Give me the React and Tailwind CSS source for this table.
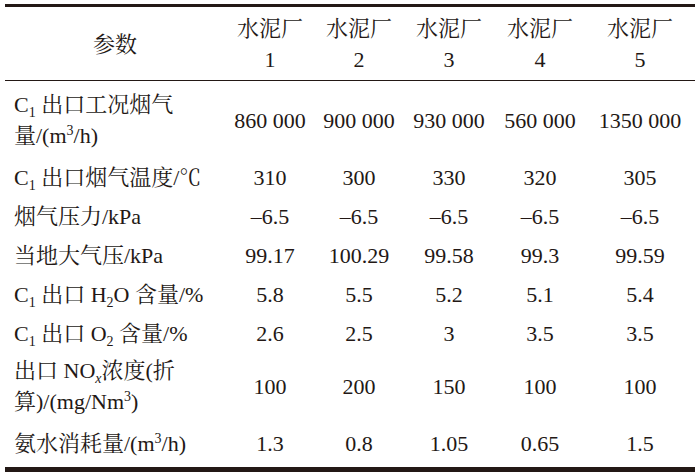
import React from "react";

// table of flue-gas parameters for five cement plants
const font = {
  fontFamily: '"Liberation Serif", "Noto Serif CJK SC", "Noto Sans CJK SC", serif',
};

const Sub = ({ children }) => (
  <sub className="relative top-[5px] bottom-auto text-[14px] leading-none align-baseline">{children}</sub>
);
const Sup = ({ children }) => (
  <sup className="relative -top-[8px] text-[14px] leading-none align-baseline">{children}</sup>
);

const rows = [
  {
    label: (
      <>
        C<Sub>1</Sub> 出口工况烟气
        <br />
        量/(m<Sup>3</Sup>/h)
      </>
    ),
    values: ["860 000", "900 000", "930 000", "560 000", "1350 000"],
    pad: "pt-[8px] pb-[7px]",
  },
  {
    label: (
      <>
        C<Sub>1</Sub> 出口烟气温度/℃
      </>
    ),
    values: ["310", "300", "330", "320", "305"],
    pad: "py-[4px]",
  },
  {
    label: <>烟气压力/kPa</>,
    values: ["–6.5", "–6.5", "–6.5", "–6.5", "–6.5"],
    pad: "py-[4px]",
  },
  {
    label: <>当地大气压/kPa</>,
    values: ["99.17", "100.29", "99.58", "99.3", "99.59"],
    pad: "py-[4px]",
  },
  {
    label: (
      <>
        C<Sub>1</Sub> 出口 H<Sub>2</Sub>O 含量/%
      </>
    ),
    values: ["5.8", "5.5", "5.2", "5.1", "5.4"],
    pad: "py-[4px]",
  },
  {
    label: (
      <>
        C<Sub>1</Sub> 出口 O<Sub>2</Sub> 含量/%
      </>
    ),
    values: ["2.6", "2.5", "3", "3.5", "3.5"],
    pad: "py-[4px]",
  },
  {
    label: (
      <>
        出口 NO<Sub><i>x</i></Sub>浓度(折
        <br />
        算)/(mg/Nm<Sup>3</Sup>)
      </>
    ),
    values: ["100", "200", "150", "100", "100"],
    pad: "py-[2px]",
  },
  {
    label: (
      <>
        氨水消耗量/(m<Sup>3</Sup>/h)
      </>
    ),
    values: ["1.3", "0.8", "1.05", "0.65", "1.5"],
    pad: "pt-[9px] pb-[8px]",
  },
];

const cols = "grid grid-cols-[220px_90px_88px_92px_90px_1fr]";

export default function App() {
  return (
    <div className="w-[695px] h-[474px] bg-white overflow-hidden" style={font}>
      <div className="ml-[5px] mt-[4px] w-[690px] border-t-[3px] border-b-[5px] border-[#231815] text-[#231815] text-[22px] leading-[31px]">
        <div className={`${cols} items-center border-b border-[#231815] pt-[6px] pb-[5px]`}>
          <div className="text-center">参数</div>
          {[1, 2, 3, 4, 5].map((n) => (
            <div key={n} className="text-center">
              水泥厂
              <br />
              {n}
            </div>
          ))}
        </div>
        {rows.map((r, i) => (
          <div key={i} className={`${cols} items-center ${r.pad}`}>
            <div className="pl-[9px] whitespace-nowrap">{r.label}</div>
            {r.values.map((v, j) => (
              <div key={j} className="text-center whitespace-nowrap">
                {v}
              </div>
            ))}
          </div>
        ))}
      </div>
    </div>
  );
}
